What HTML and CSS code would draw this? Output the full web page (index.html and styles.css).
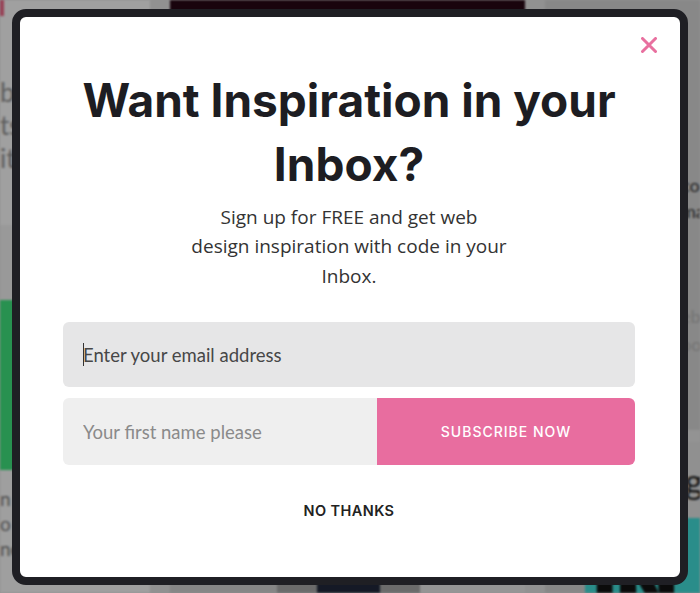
FILE: index.html
```html
<!DOCTYPE html>
<html lang="en">
<head>
<meta charset="UTF-8" />
<meta name="viewport" content="width=device-width, initial-scale=1.0" />
<title>Want Inspiration in your Inbox?</title>
<link rel="stylesheet" href="styles.css">
</head>
<body>

<!-- page behind the popup -->
<div class="page">
    <div class="col col-left">
        <div class="post post-top">
            <span class="tag"></span>
            <p class="excerpt">best popups<br>ts and forms<br>it with code</p>
        </div>
        <div class="post post-band"></div>
        <div class="thumb thumb-green"></div>
        <div class="post post-bottom">
            <p class="excerpt small">n the web<br>o read more<br>ne design</p>
        </div>
    </div>
    <div class="col col-mid">
        <div class="thumb thumb-dark"></div>
        <div class="post post-mid"></div>
        <div class="thumb thumb-navy"></div>
    </div>
    <div class="col col-right">
        <div class="post post-side">
            <p class="excerpt dark">co<br>ma</p>
            <p class="excerpt light">eb<br>oo</p>
        </div>
        <div class="post post-line"></div>
        <div class="post post-title">
            <p class="big-letter">g</p>
        </div>
        <div class="thumb thumb-teal"><span>IN</span></div>
    </div>
</div>

<div class="overlay">
    <div class="modal">
        <button class="close" aria-label="Close">
            <svg width="16" height="16" viewBox="0 0 16 16">
                <path d="M1.5 1.5 L14.5 14.5 M14.5 1.5 L1.5 14.5" stroke="#e8709f" stroke-width="3" stroke-linecap="round" fill="none"/>
            </svg>
        </button>

        <h1>Want Inspiration in your Inbox?</h1>
        <p class="intro">Sign up for FREE and get web<br>design inspiration with code in your<br>Inbox.</p>

        <form class="signup" onsubmit="return false">
            <div class="field">
                <span class="caret"></span>
                <input type="email" class="email" placeholder="Enter your email address">
            </div>
            <div class="row">
                <input type="text" class="name" placeholder="Your first name please">
                <button type="submit" class="subscribe">SUBSCRIBE NOW</button>
            </div>
        </form>

        <a href="#" class="no-thanks">NO THANKS</a>
    </div>
</div>

</body>
</html>
```

FILE: styles.css
```css
body {
    margin: 0;
    width: 700px;
    height: 593px;
    overflow: hidden;
    background: #d6d6d6;
    font-family: "Open Sans", sans-serif;
}

/* ---- page behind ---- */

.page {
    display: grid;
    grid-template-columns: 150px 355px 1fr;
    column-gap: 20px;
    height: 593px;
    filter: blur(1.2px);
}

.col {
    display: flex;
    flex-direction: column;
    overflow: hidden;
}

.col > div {
    flex-shrink: 0;
}

.post {
    background: #ececec;
}

.post-top {
    height: 225px;
    position: relative;
}

.tag {
    position: absolute;
    top: 0;
    left: 0;
    width: 4px;
    height: 16px;
    background: #e0607f;
}

.excerpt {
    margin: 0;
    font-family: "Lato", sans-serif;
    color: #8a8a8a;
    white-space: nowrap;
}

.post-top .excerpt {
    padding-top: 76px;
    font-size: 26px;
    line-height: 33px;
}

.excerpt.small {
    padding-top: 16px;
    font-size: 19px;
    line-height: 25px;
    color: #777;
}

.post-band {
    height: 75px;
    background: #e2e2e2;
}

.thumb-green {
    height: 170px;
    background: #3cd677;
}

.col .post-bottom,
.col .post-mid,
.col .thumb-teal {
    flex: 1;
    min-height: 0;
}

.post-bottom {
    background: #eaeaea;
}

.thumb-dark {
    height: 200px;
    background: #250714;
}

.post-mid {
    background: #d0d0d0;
}

.thumb-navy {
    height: 110px;
    background: linear-gradient(90deg, #c6c6c6 0 107px, #9e9e9e 107px 147px, #1f2638 147px 210px, #9e9e9e 210px 250px, #dcdcdc 250px);
}

.post-side {
    height: 430px;
    background: #c9c9c9;
    padding-left: 136px;
    box-sizing: border-box;
}

.excerpt.dark {
    padding-top: 172px;
    font-size: 18px;
    line-height: 26px;
    color: #333;
}

.excerpt.light {
    padding-top: 78px;
    font-size: 18px;
    line-height: 28px;
    color: #a9a9a9;
}

.post-line {
    height: 12px;
    background: #d9d9d9;
}

.post-title {
    height: 76px;
    background: #d4d4d4;
    padding-left: 140px;
    box-sizing: border-box;
}

.big-letter {
    margin: 0;
    padding-top: 22px;
    font-family: "Lato", sans-serif;
    font-size: 34px;
    line-height: 1;
    color: #222;
}

.thumb-teal {
    background: linear-gradient(90deg, #c8c8c8 0 40px, #3ed0cc 40px);
    padding: 26px 0 0 48px;
    font-family: "Inter", sans-serif;
    font-weight: 900;
    font-size: 80px;
    line-height: 1;
    color: #111;
    overflow: hidden;
}

/* ---- popup ---- */

.overlay {
    position: fixed;
    inset: 0;
    background: rgba(0, 0, 0, 0.32);
    display: flex;
    align-items: center;
    justify-content: center;
}

.modal {
    position: relative;
    box-sizing: border-box;
    width: 676px;
    height: 576px;
    padding: 51px 45px 0 43px;
    border: 8px solid #1f1f24;
    border-radius: 14px;
    background: #fff;
    display: flex;
    flex-direction: column;
    align-items: center;
}

.close {
    position: absolute;
    top: 20px;
    right: 23px;
    padding: 0;
    border: none;
    background: none;
    cursor: pointer;
    line-height: 0;
}

h1 {
    margin: 0;
    font-family: "Inter", sans-serif;
    font-weight: 700;
    font-size: 46px;
    line-height: 64px;
    color: #1d1d22;
    text-align: center;
}

.intro {
    margin: 7px 0 0;
    font-size: 19px;
    line-height: 29.5px;
    color: #333;
    text-align: center;
}

.signup {
    width: 100%;
    margin-top: 31px;
}

.field {
    position: relative;
}

.caret {
    position: absolute;
    left: 20px;
    top: 21px;
    width: 1px;
    height: 23px;
    background: #333;
}

input {
    display: block;
    border: none;
    outline: none;
    font-family: "Lato", sans-serif;
    font-size: 18.5px;
    padding: 0 20px;
    box-sizing: border-box;
}

.email {
    width: 100%;
    height: 65px;
    background: #e6e6e7;
    border-radius: 6px;
}

.email::placeholder {
    color: #474747;
}

.row {
    display: flex;
    margin-top: 11px;
    height: 67px;
}

.name {
    width: 314px;
    height: 100%;
    background: #efefef;
    border-radius: 6px 0 0 6px;
}

.name::placeholder {
    color: #8a8a8a;
}

.subscribe {
    flex: 1;
    border: none;
    border-radius: 0 6px 6px 0;
    background: #e86d9f;
    color: #fff;
    font-family: "Inter", sans-serif;
    font-weight: 500;
    font-size: 14px;
    letter-spacing: 1px;
    cursor: pointer;
}

.no-thanks {
    margin-top: 37px;
    font-family: "Inter", sans-serif;
    font-weight: 600;
    font-size: 14.5px;
    letter-spacing: 0.4px;
    color: #222;
    text-decoration: none;
}
```
